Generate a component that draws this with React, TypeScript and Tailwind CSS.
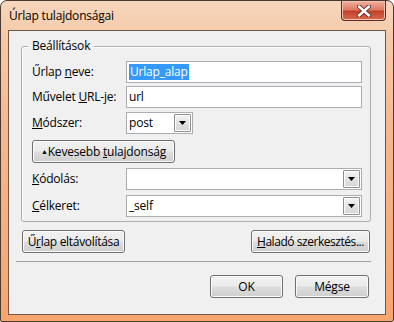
import React from 'react';

const font = { fontFamily: '"Open Sans", "Noto Sans", "Liberation Sans", sans-serif' };

const btn =
  'flex items-center justify-center h-[23px] rounded-[3px] border border-[#707070] bg-[linear-gradient(to_bottom,#f2f2f2_0%,#ebebeb_48%,#dddddd_52%,#cfcfcf_100%)] shadow-[inset_0_0_0_1px_#fbfbfb] text-[12px] tracking-[-0.2px] text-black leading-none';

const Arrow = () => (
  <div className="flex items-center justify-center w-[17px] h-[18px] border border-[#8f8f8f] rounded-[1px] bg-[linear-gradient(to_bottom,#f4f4f4,#e3e3e3_50%,#d4d4d4)] shadow-[inset_0_0_0_1px_#fcfcfc]">
    <svg width="7" height="4" viewBox="0 0 7 4">
      <path d="M0 0h7L3.5 4z" fill="#000" />
    </svg>
  </div>
);

const Label: React.FC<{ children: React.ReactNode }> = ({ children }) => (
  <div className="w-[94px] text-[12px] tracking-[-0.2px] text-black leading-none">{children}</div>
);

const Field: React.FC<{
  label: React.ReactNode;
  width: string;
  value?: React.ReactNode;
  combo?: boolean;
  className?: string;
}> = ({ label, width, value, combo, className }) => (
  <div className={`flex items-center ${className ?? ''}`}>
    <Label>{label}</Label>
    <div
      className={`flex items-center justify-between h-[22px] ${width} border border-[#abadb3] bg-white pl-[2px] pr-[1px] text-[12px] tracking-[-0.2px] text-black`}
    >
      <div className="flex items-center h-full">{value}</div>
      {combo && <Arrow />}
    </div>
  </div>
);

export default function App() {
  return (
    <div className="w-[394px] h-[322px] bg-white" style={font}>
      <div className="w-[394px] h-[322px] rounded-t-[7px] rounded-b-[2px] border border-[#4b3a2f] bg-[linear-gradient(to_bottom,#f7d6bd_0%,#f6c9a6_12%,#f5b88f_40%,#f8a56d_100%)] flex flex-col">
        {/* title bar */}
        <div className="flex justify-between h-[29px] shrink-0">
          <div className="pl-[8px] pt-[7px] text-[12px] tracking-[-0.2px] text-black leading-[15px]">Úrlap tulajdonságai</div>
          <div className="mr-[7px] w-[45px] h-[20px] rounded-b-[4px] border border-t-0 border-[#5b2a20] bg-[linear-gradient(to_bottom,#efb3a1_0%,#dd7c64_45%,#c2412a_55%,#d86a4c_100%)] flex items-center justify-center shadow-[inset_0_0_0_1px_#f3c2b2]">
            <svg width="14" height="12" viewBox="0 0 14 12">
              <path d="M2 1.5L12 10.5M12 1.5L2 10.5" stroke="#5a2a20" strokeWidth="4.2" strokeLinecap="round" />
              <path d="M2 1.5L12 10.5M12 1.5L2 10.5" stroke="#ffffff" strokeWidth="2.4" strokeLinecap="round" />
            </svg>
          </div>
        </div>

        {/* client area */}
        <div className="ml-[7px] w-[378px] h-[285px] border border-[#6f5747] bg-[#f0f0f0] flex flex-col">
          {/* group box */}
          <div className="relative ml-[12px] mt-[15px] w-[350px] rounded-[3px] border border-[#adadad] shadow-[inset_1px_1px_0_#ffffff] pl-[10px] pt-[14px] pb-[4px]">
            <div className="absolute left-[6px] top-[-9px] px-[4px] bg-[#f0f0f0] text-[12px] tracking-[-0.2px] text-black leading-[16px]">
              Beállítások
            </div>
            <Field
              label={<>Űrlap <u>n</u>eve:</>}
              width="w-[236px]"
              value={<span className="bg-[#3399ff] text-white px-[1px] leading-[16px]">Urlap_alap</span>}
            />
            <Field className="mt-[3px]" label={<>Művelet <u>U</u>RL-je:</>} width="w-[236px]" value="url" />
            <Field className="mt-[4px]" label={<><u>M</u>ódszer:</>} width="w-[67px]" value="post" combo />
            <div className="mt-[6px] flex">
              <div className={`${btn} w-[143px]`}>
                <span>
                  <span className="text-[7px] align-[2px]">▲</span>Kevesebb <u>t</u>ulajdonság
                </span>
              </div>
            </div>
            <Field className="mt-[5px]" label={<><u>K</u>ódolás:</>} width="w-[236px]" combo />
            <Field className="mt-[5px]" label={<><u>C</u>élkeret:</>} width="w-[236px]" value="_self" combo />
          </div>

          {/* action buttons */}
          <div className="flex justify-between ml-[13px] w-[348px] mt-[8px]">
            <div className={`${btn} w-[103px]`}>
              <span className="tracking-[-0.3px]">Ű<u>r</u>lap eltávolítása</span>
            </div>
            <div className={`${btn} w-[119px]`}>
              <span className="tracking-[-0.45px]"><u>H</u>aladó szerkesztés...</span>
            </div>
          </div>

          <div className="ml-[7px] mt-[8px] w-[355px] h-px bg-[#a0a0a0]" />

          <div className="flex justify-end gap-[12px] mr-[16px] mt-[13px]">
            <div className={`${btn} w-[73px] border-[#3c7fb1] shadow-[inset_0_0_0_1px_#5fd0f7]`}>OK</div>
            <div className={`${btn} w-[74px]`}>Mégse</div>
          </div>
        </div>
      </div>
    </div>
  );
}
